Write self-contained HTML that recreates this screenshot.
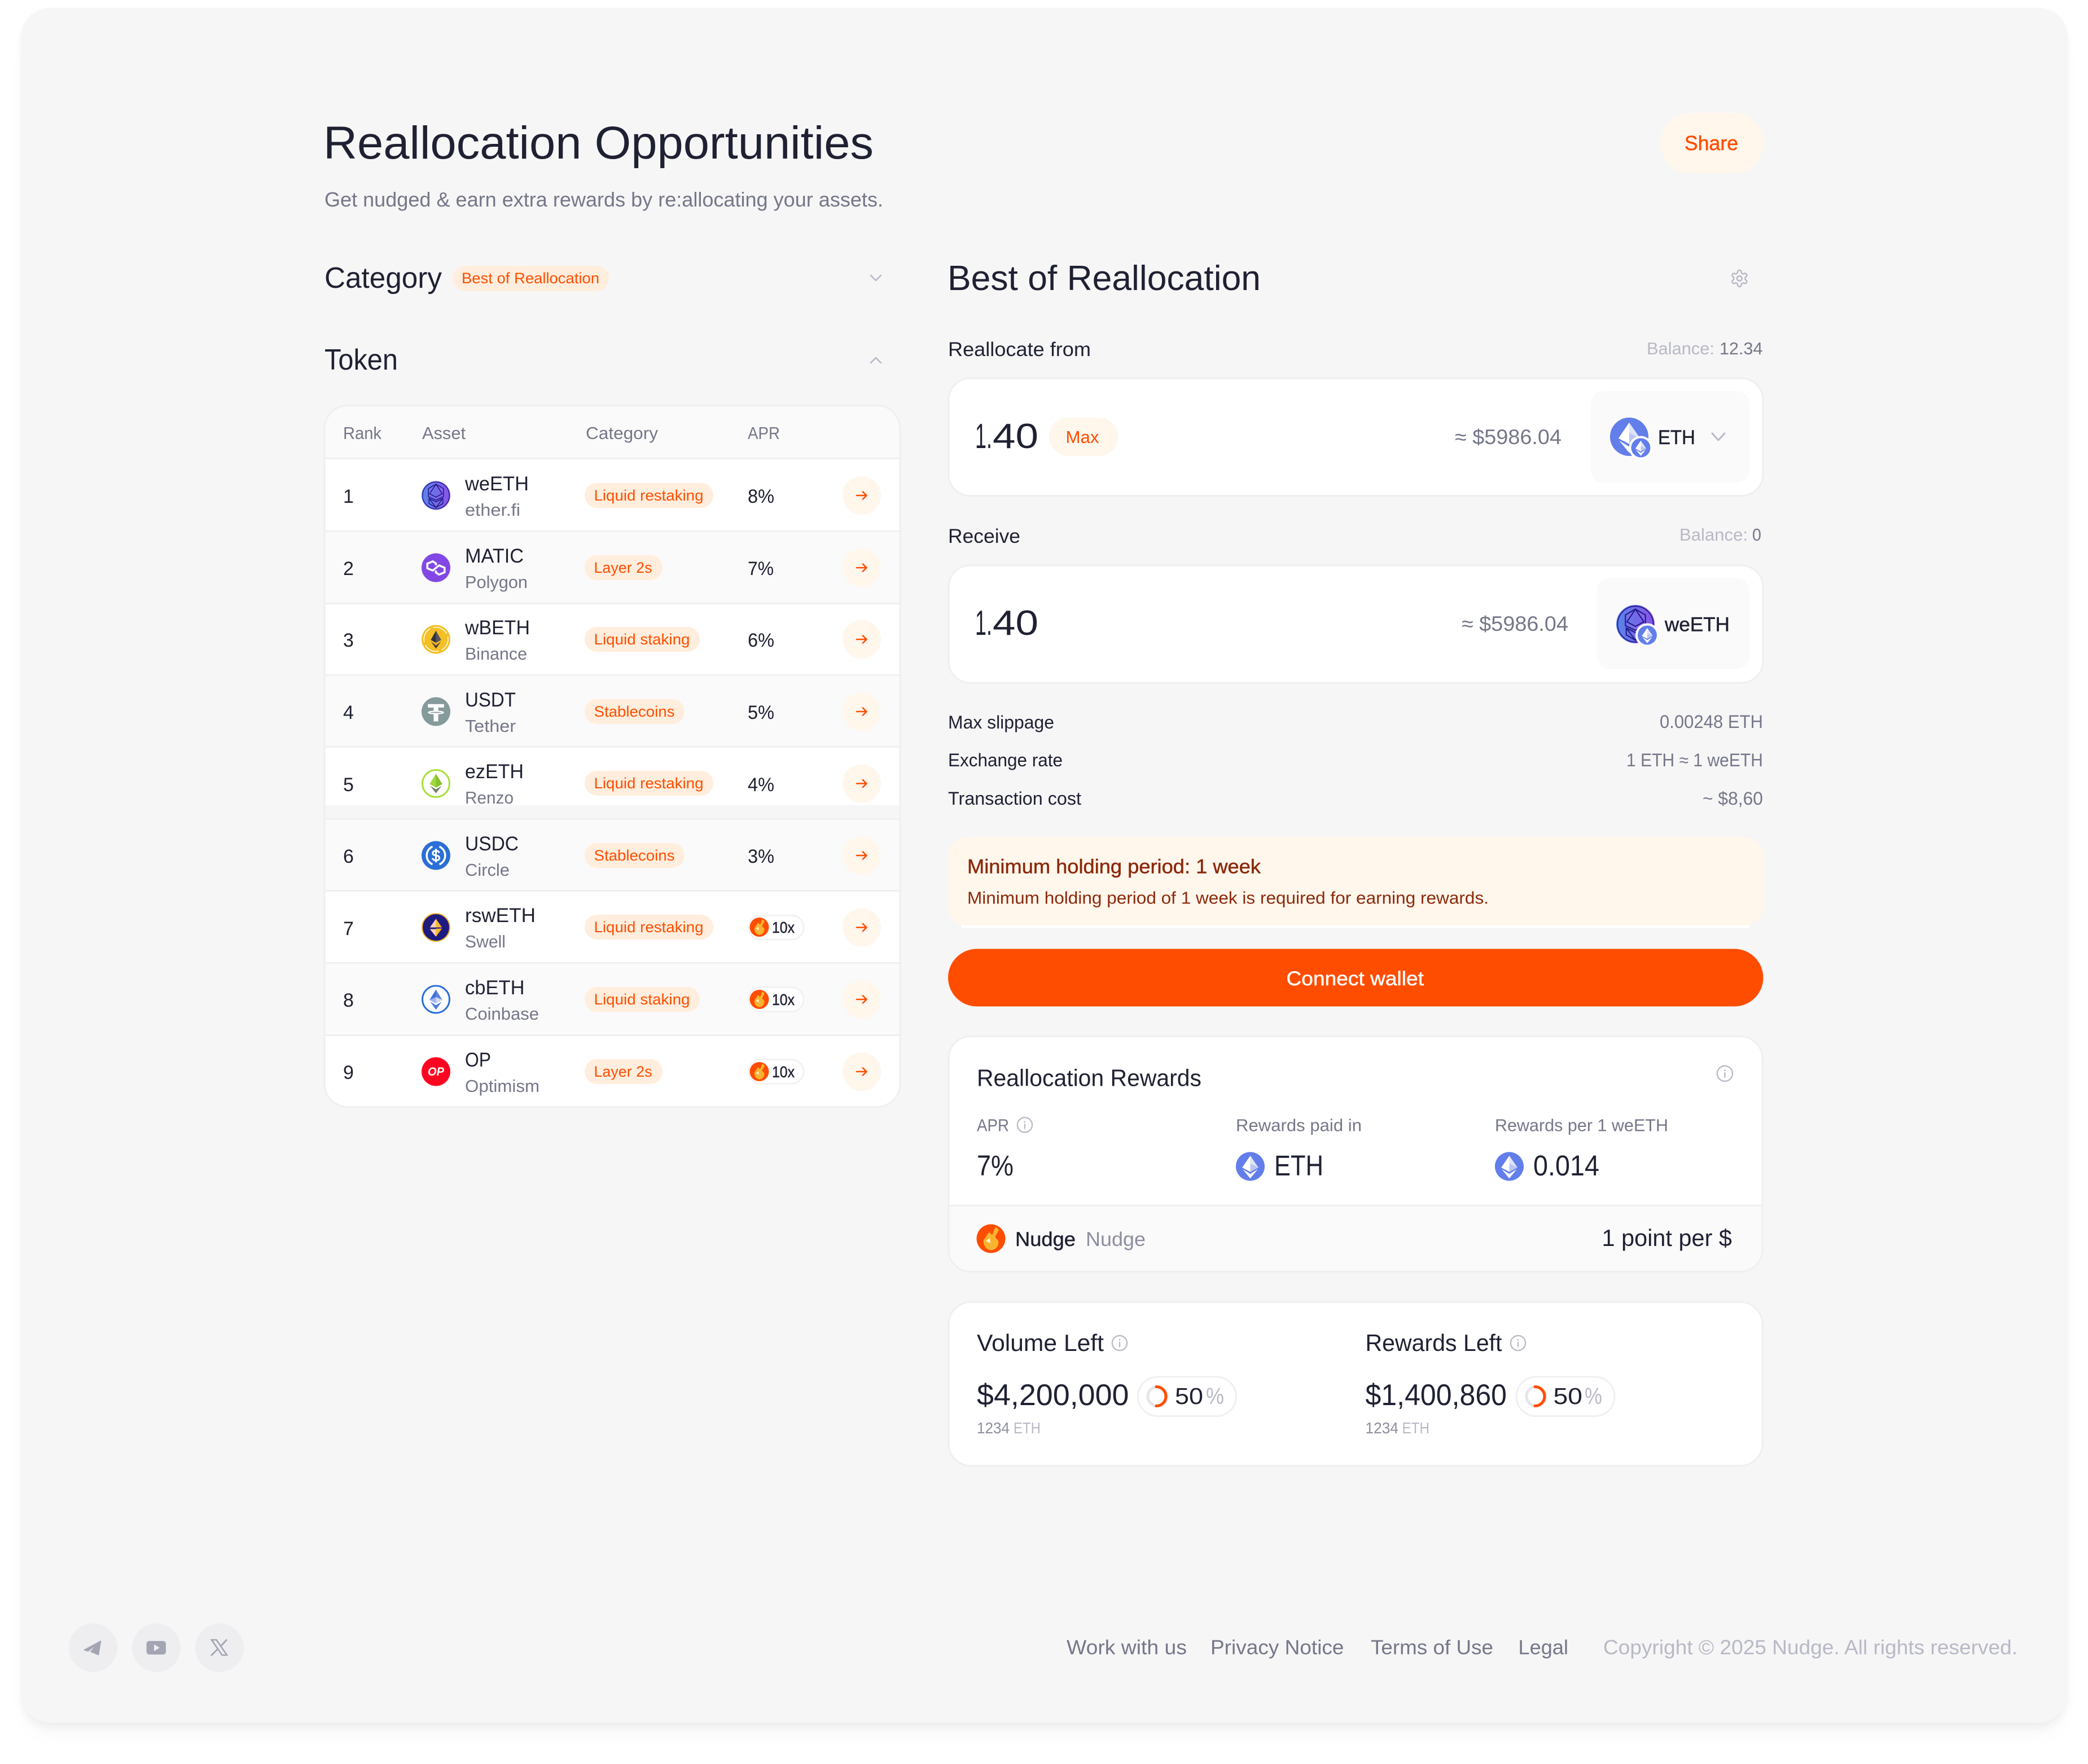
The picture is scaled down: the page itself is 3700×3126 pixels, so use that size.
<!DOCTYPE html>
<html lang="en">
<head>
<meta charset="utf-8">
<title>Reallocation Opportunities</title>
<style>
html,body{margin:0;padding:0;background:#fff;width:3700px;height:3126px;overflow:hidden}
#card{position:absolute;left:37px;top:14px;width:3627px;height:3039px;background:#f6f6f6;border-radius:52px;box-shadow:0 12px 16px -3px rgba(0,0,0,.05),0 28px 38px -6px rgba(0,0,0,.022),0 0 12px rgba(0,0,0,.014)}
svg{position:absolute;left:0;top:0}
text{font-family:"Liberation Sans",Arial,sans-serif;white-space:pre}
.d{fill:#1f2133}.g{fill:#757789}.l{fill:#b8b9c6}.o{fill:#ff4d00}.w{fill:#fff}.n{fill:#8d8e9e}.b{fill:#8b2a0b}
.m{stroke-width:.5px}
.d.m{stroke:#1f2133}.o.m{stroke:#ff4d00}.w.m{stroke:#fff}.b.m{stroke:#8b2a0b}
</style>
</head>
<body>
<div id="card"></div>
<svg width="3700" height="3126" viewBox="0 0 3700 3126" xmlns="http://www.w3.org/2000/svg">
<defs>
<linearGradient id="we" x1="0" y1="0" x2="1" y2="0"><stop offset="0" stop-color="#5a85ea"/><stop offset="1" stop-color="#8a52e6"/></linearGradient>
<clipPath id="tb"><rect x="574" y="717" width="1022" height="1246" rx="42"/></clipPath>
<clipPath id="rc"><rect x="1680" y="1835" width="1444" height="420" rx="40"/></clipPath>
<symbol id="eth" viewBox="0 0 100 100"><circle cx="50" cy="50" r="50" fill="#627eea"/><path d="M50 13 22 54 50 69 78 54Z" fill="#fff"/><path d="M50 13V69L78 54Z" fill="#dfe4f8"/><path d="M50 40 78 54 50 69Z" fill="#b9c5f2"/><path d="M24 60 50 92 76 60 50 76Z" fill="#fff"/></symbol>
<symbol id="wee" viewBox="0 0 100 100"><circle cx="50" cy="50" r="50" fill="url(#we)"/><circle cx="50" cy="50" r="46.500" fill="none" stroke="#1f1a8a" stroke-width="2.500"/><path d="M50 11 76 26V54L50 66 24 54V26ZM50 11 28 44 50 56 72 44Z" fill="#9a6be8" fill-opacity=".35" stroke="#1f1a8a" stroke-width="3"/><path d="M26 60 50 72 74 60V78L50 92 26 78ZM26 60 50 92 74 60" fill="none" stroke="#1f1a8a" stroke-width="3"/></symbol>
<symbol id="pol" viewBox="0 0 100 100"><circle cx="50" cy="50" r="50" fill="#8247e5"/><path d="M50 42V35L39 28 20 36V52L39 60 61 42 80 50V66L61 74 50 67V60" fill="none" stroke="#fff" stroke-width="7" stroke-linejoin="miter"/></symbol>
<symbol id="bnb" viewBox="0 0 100 100"><circle cx="50" cy="50" r="50" fill="#f5bf26"/><circle cx="50" cy="50" r="42" fill="none" stroke="#fff" stroke-width="3" stroke-dasharray="55 11" stroke-dashoffset="10"/><path d="M50 20 32 52 50 62 68 52Z" fill="#33333c"/><path d="M50 20V62L68 52Z" fill="#55555f"/><path d="M33 58 50 82 67 58 50 68Z" fill="#3a3a42"/><path d="M33 58 50 68 67 58 50 72Z" fill="#f09a1a"/></symbol>
<symbol id="usdt" viewBox="0 0 100 100"><circle cx="50" cy="50" r="50" fill="#859a9a"/><path d="M22 24H78V36H58V47C68 47.500 78 49 78 53 78 57 68 59 58 59V84H42V59C32 59 22 57 22 53 22 49 32 47.500 42 47V36H22Z" fill="#fff"/><path d="M28 53C34 50.500 66 50.500 72 53 66 55.500 34 55.500 28 53Z" fill="#859a9a"/></symbol>
<symbol id="ez" viewBox="0 0 100 100"><circle cx="50" cy="50" r="47" fill="#fff" stroke="#a8df3a" stroke-width="6"/><path d="M50 16 28 52 50 64 72 52Z" fill="#9fd93c"/><path d="M50 16V64L72 52Z" fill="#86c22b"/><path d="M30 58 50 84 70 58 50 70Z" fill="#73806a"/></symbol>
<symbol id="usdc" viewBox="0 0 100 100"><circle cx="50" cy="50" r="50" fill="#2a6fd6"/><path d="M38 19A34 34 0 0 0 38 81M62 19A34 34 0 0 1 62 81" fill="none" stroke="#fff" stroke-width="7"/><path d="M61 41C60 36 56 34 50 34 43 34 39 37 39 42 39 54 62 46 62 59 62 64 57 67 50 67 44 67 39 64 38 59M50 27V74" fill="none" stroke="#fff" stroke-width="6"/></symbol>
<symbol id="sw" viewBox="0 0 100 100"><circle cx="50" cy="50" r="48" fill="#1f1a7f" stroke="#f7b733" stroke-width="4"/><path d="M50 20 29 50H50Z" fill="#fbd0b5"/><path d="M50 20 71 50H50Z" fill="#f7b733"/><path d="M29 56H50V82Z" fill="#fbd0b5"/><path d="M71 54H50V82Z" fill="#f7b733"/></symbol>
<symbol id="cb" viewBox="0 0 100 100"><circle cx="50" cy="50" r="47" fill="#fff" stroke="#2a6fd6" stroke-width="6"/><path d="M50 16 28 52 50 64Z" fill="#3f73dc"/><path d="M50 16 72 52 50 64Z" fill="#5b84e4"/><path d="M28 52 50 42 72 52 50 64Z" fill="#9db4ee"/><path d="M50 42 72 52 50 64Z" fill="#d5dbe8"/><path d="M30 58 50 86 70 58 50 70Z" fill="#4d7be0"/></symbol>
<symbol id="fl" viewBox="0 0 100 100"><circle cx="50" cy="50" r="50" fill="#ff4d00"/><path d="M66 8 54 38 44 26 24 56C24 78 36 90 52 90 68 88 78 74 76 58L64 44 78 20Z" fill="#f8b32f"/><path d="M46 48 32 58 48 66Z" fill="#fff" opacity=".85"/></symbol>
<symbol id="info" viewBox="0 0 24 24"><circle cx="12" cy="12" r="10.500" fill="none" stroke="#b8b9c6" stroke-width="1.800"/><path d="M12 11V17" stroke="#b8b9c6" stroke-width="1.800" stroke-linecap="round"/><circle cx="12" cy="7.500" r="1.100" fill="#b8b9c6"/></symbol>
<symbol id="arr" viewBox="0 0 20 16"><path d="M1 8H18M12 1.500 18.500 8 12 14.500" fill="none" stroke="#ff4d00" stroke-width="2.600" stroke-linecap="round" stroke-linejoin="round"/></symbol>
</defs>

<!-- header -->
<text x="573" y="281" font-size="82" class="d" textLength="975" lengthAdjust="spacingAndGlyphs">Reallocation Opportunities</text>
<text x="575" y="366" font-size="36" class="g" textLength="990" lengthAdjust="spacingAndGlyphs">Get nudged &amp; earn extra rewards by re:allocating your assets.</text>
<rect x="2942" y="200" width="183" height="107" rx="53.500" fill="#fff6ec"/>
<text x="2985" y="266" font-size="36" class="o m" textLength="95" lengthAdjust="spacingAndGlyphs">Share</text>

<!-- left filter -->
<text x="575" y="510" font-size="52" class="d" textLength="208" lengthAdjust="spacingAndGlyphs">Category</text>
<rect x="802" y="471" width="277" height="45" rx="22.500" fill="#ffeedd"/>
<text x="818" y="502" font-size="27" class="o" textLength="244" lengthAdjust="spacingAndGlyphs">Best of Reallocation</text>
<path d="M1543 488 1552 497 1561 488" fill="none" stroke="#b8b9c6" stroke-width="2.600" stroke-linecap="round" stroke-linejoin="round"/>
<text x="575" y="655" font-size="52" class="d" textLength="130" lengthAdjust="spacingAndGlyphs">Token</text>
<path d="M1543 643 1552 634 1561 643" fill="none" stroke="#b8b9c6" stroke-width="2.600" stroke-linecap="round" stroke-linejoin="round"/>

<!-- table -->
<g clip-path="url(#tb)">
<rect x="574" y="717" width="1022" height="1246" fill="#fafafa"/>
<rect x="574" y="813" width="1022" height="128" fill="#fff"/>
<rect x="574" y="1069" width="1022" height="127" fill="#fff"/>
<rect x="574" y="1323" width="1022" height="104" fill="#fff"/>
<rect x="574" y="1427" width="1022" height="24" fill="#f6f6f6"/>
<rect x="574" y="1578" width="1022" height="128" fill="#fff"/>
<rect x="574" y="1834" width="1022" height="129" fill="#fff"/>
<g fill="#efefef">
<rect x="574" y="811" width="1022" height="3"/><rect x="574" y="940" width="1022" height="2.500"/><rect x="574" y="1068" width="1022" height="3"/><rect x="574" y="1195" width="1022" height="2.500"/><rect x="574" y="1322" width="1022" height="3"/><rect x="574" y="1450" width="1022" height="2.500"/><rect x="574" y="1577" width="1022" height="3"/><rect x="574" y="1705" width="1022" height="2.500"/><rect x="574" y="1833" width="1022" height="3"/>
</g>
</g>
<rect x="575" y="718.500" width="1020" height="1243" rx="41" fill="none" stroke="#efefef" stroke-width="3"/>
<text x="608" y="778" font-size="31" class="g" textLength="68" lengthAdjust="spacingAndGlyphs">Rank</text>
<text x="748" y="778" font-size="31" class="g" textLength="77" lengthAdjust="spacingAndGlyphs">Asset</text>
<text x="1038" y="778" font-size="31" class="g" textLength="128" lengthAdjust="spacingAndGlyphs">Category</text>
<text x="1325" y="778" font-size="31" class="g" textLength="57" lengthAdjust="spacingAndGlyphs">APR</text>

<!-- row 1 -->
<text x="608" y="891" font-size="34" class="d">1</text>
<use href="#wee" x="747" y="852.500" width="51" height="51"/>
<text x="824" y="869" font-size="35" class="d" textLength="113" lengthAdjust="spacingAndGlyphs">weETH</text>
<text x="824" y="914" font-size="31" class="g" textLength="98" lengthAdjust="spacingAndGlyphs">ether.fi</text>
<rect x="1036" y="856" width="228" height="44" rx="22" fill="#ffeedd"/>
<text x="1052.500" y="887" font-size="27" class="o" textLength="194" lengthAdjust="spacingAndGlyphs">Liquid restaking</text>
<text x="1325" y="891" font-size="34" class="d" textLength="47" lengthAdjust="spacingAndGlyphs">8%</text>
<circle cx="1527" cy="878" r="34" fill="#fff6ec"/><use href="#arr" x="1517" y="870" width="20" height="16"/>

<!-- row 2 -->
<text x="608" y="1019" font-size="34" class="d">2</text>
<use href="#pol" x="747" y="980.500" width="51" height="51"/>
<text x="824" y="997" font-size="35" class="d" textLength="104" lengthAdjust="spacingAndGlyphs">MATIC</text>
<text x="824" y="1042" font-size="31" class="g" textLength="111" lengthAdjust="spacingAndGlyphs">Polygon</text>
<rect x="1036" y="984" width="138" height="44" rx="22" fill="#ffeedd"/>
<text x="1052.500" y="1015" font-size="27" class="o" textLength="103" lengthAdjust="spacingAndGlyphs">Layer 2s</text>
<text x="1325" y="1019" font-size="34" class="d" textLength="46" lengthAdjust="spacingAndGlyphs">7%</text>
<circle cx="1527" cy="1006" r="34" fill="#fff6ec"/><use href="#arr" x="1517" y="998" width="20" height="16"/>

<!-- row 3 -->
<text x="608" y="1146" font-size="34" class="d">3</text>
<use href="#bnb" x="747" y="1107.500" width="51" height="51"/>
<text x="824" y="1124" font-size="35" class="d" textLength="115" lengthAdjust="spacingAndGlyphs">wBETH</text>
<text x="824" y="1169" font-size="31" class="g" textLength="110" lengthAdjust="spacingAndGlyphs">Binance</text>
<rect x="1036" y="1111" width="204" height="44" rx="22" fill="#ffeedd"/>
<text x="1052.500" y="1142" font-size="27" class="o" textLength="170" lengthAdjust="spacingAndGlyphs">Liquid staking</text>
<text x="1325" y="1146" font-size="34" class="d" textLength="47" lengthAdjust="spacingAndGlyphs">6%</text>
<circle cx="1527" cy="1133" r="34" fill="#fff6ec"/><use href="#arr" x="1517" y="1125" width="20" height="16"/>

<!-- row 4 -->
<text x="608" y="1274" font-size="34" class="d">4</text>
<use href="#usdt" x="747" y="1235.500" width="51" height="51"/>
<text x="824" y="1252" font-size="35" class="d" textLength="90" lengthAdjust="spacingAndGlyphs">USDT</text>
<text x="824" y="1297" font-size="31" class="g" textLength="90" lengthAdjust="spacingAndGlyphs">Tether</text>
<rect x="1036" y="1239" width="177" height="44" rx="22" fill="#ffeedd"/>
<text x="1052.500" y="1270" font-size="27" class="o" textLength="143" lengthAdjust="spacingAndGlyphs">Stablecoins</text>
<text x="1325" y="1274" font-size="34" class="d" textLength="47" lengthAdjust="spacingAndGlyphs">5%</text>
<circle cx="1527" cy="1261" r="34" fill="#fff6ec"/><use href="#arr" x="1517" y="1253" width="20" height="16"/>

<!-- row 5 -->
<text x="608" y="1402" font-size="34" class="d">5</text>
<use href="#ez" x="747" y="1363" width="51" height="51"/>
<text x="824" y="1379" font-size="35" class="d" textLength="104" lengthAdjust="spacingAndGlyphs">ezETH</text>
<text x="824" y="1424" font-size="31" class="g" textLength="86" lengthAdjust="spacingAndGlyphs">Renzo</text>
<rect x="1036" y="1366" width="228" height="44" rx="22" fill="#ffeedd"/>
<text x="1052.500" y="1397" font-size="27" class="o" textLength="194" lengthAdjust="spacingAndGlyphs">Liquid restaking</text>
<text x="1325" y="1402" font-size="34" class="d" textLength="47" lengthAdjust="spacingAndGlyphs">4%</text>
<circle cx="1527" cy="1388.500" r="34" fill="#fff6ec"/><use href="#arr" x="1517" y="1380.500" width="20" height="16"/>

<!-- row 6 -->
<text x="608" y="1529" font-size="34" class="d">6</text>
<use href="#usdc" x="747" y="1490.500" width="51" height="51"/>
<text x="824" y="1507" font-size="35" class="d" textLength="95" lengthAdjust="spacingAndGlyphs">USDC</text>
<text x="824" y="1552" font-size="31" class="g" textLength="79" lengthAdjust="spacingAndGlyphs">Circle</text>
<rect x="1036" y="1494" width="177" height="44" rx="22" fill="#ffeedd"/>
<text x="1052.500" y="1525" font-size="27" class="o" textLength="143" lengthAdjust="spacingAndGlyphs">Stablecoins</text>
<text x="1325" y="1529" font-size="34" class="d" textLength="47" lengthAdjust="spacingAndGlyphs">3%</text>
<circle cx="1527" cy="1516" r="34" fill="#fff6ec"/><use href="#arr" x="1517" y="1508" width="20" height="16"/>

<!-- row 7 -->
<text x="608" y="1657" font-size="34" class="d">7</text>
<use href="#sw" x="747" y="1618" width="51" height="51"/>
<text x="824" y="1634" font-size="35" class="d" textLength="125" lengthAdjust="spacingAndGlyphs">rswETH</text>
<text x="824" y="1679" font-size="31" class="g" textLength="72" lengthAdjust="spacingAndGlyphs">Swell</text>
<rect x="1036" y="1621" width="228" height="44" rx="22" fill="#ffeedd"/>
<text x="1052.500" y="1652" font-size="27" class="o" textLength="194" lengthAdjust="spacingAndGlyphs">Liquid restaking</text>
<rect x="1327" y="1622" width="97" height="43" rx="21.500" fill="#fff" stroke="#f0f0f0" stroke-width="2.500"/>
<use href="#fl" x="1328.500" y="1626" width="34" height="34"/>
<text x="1368" y="1653" font-size="28" class="d m" textLength="40" lengthAdjust="spacingAndGlyphs">10x</text>
<circle cx="1527" cy="1643.500" r="34" fill="#fff6ec"/><use href="#arr" x="1517" y="1635.500" width="20" height="16"/>

<!-- row 8 -->
<text x="608" y="1784" font-size="34" class="d">8</text>
<use href="#cb" x="747" y="1745.500" width="51" height="51"/>
<text x="824" y="1762" font-size="35" class="d" textLength="105.500" lengthAdjust="spacingAndGlyphs">cbETH</text>
<text x="824" y="1807" font-size="31" class="g" textLength="131" lengthAdjust="spacingAndGlyphs">Coinbase</text>
<rect x="1036" y="1749" width="204" height="44" rx="22" fill="#ffeedd"/>
<text x="1052.500" y="1780" font-size="27" class="o" textLength="170" lengthAdjust="spacingAndGlyphs">Liquid staking</text>
<rect x="1327" y="1749.500" width="97" height="43" rx="21.500" fill="#fff" stroke="#f0f0f0" stroke-width="2.500"/>
<use href="#fl" x="1328.500" y="1754" width="34" height="34"/>
<text x="1368" y="1781" font-size="28" class="d m" textLength="40" lengthAdjust="spacingAndGlyphs">10x</text>
<circle cx="1527" cy="1771" r="34" fill="#fff6ec"/><use href="#arr" x="1517" y="1763" width="20" height="16"/>

<!-- row 9 -->
<text x="608" y="1912" font-size="34" class="d">9</text>
<circle cx="772.500" cy="1899" r="25.500" fill="#ff0420"/>
<text x="758" y="1906" font-size="21" font-weight="bold" font-style="italic" class="w" textLength="29" lengthAdjust="spacingAndGlyphs">OP</text>
<text x="824" y="1890" font-size="35" class="d" textLength="46" lengthAdjust="spacingAndGlyphs">OP</text>
<text x="824" y="1935" font-size="31" class="g" textLength="132" lengthAdjust="spacingAndGlyphs">Optimism</text>
<rect x="1036" y="1877" width="138" height="44" rx="22" fill="#ffeedd"/>
<text x="1052.500" y="1908" font-size="27" class="o" textLength="103" lengthAdjust="spacingAndGlyphs">Layer 2s</text>
<rect x="1327" y="1877.500" width="97" height="43" rx="21.500" fill="#fff" stroke="#f0f0f0" stroke-width="2.500"/>
<use href="#fl" x="1328.500" y="1882" width="34" height="34"/>
<text x="1368" y="1909" font-size="28" class="d m" textLength="40" lengthAdjust="spacingAndGlyphs">10x</text>
<circle cx="1527" cy="1899" r="34" fill="#fff6ec"/><use href="#arr" x="1517" y="1891" width="20" height="16"/>

<!-- right column -->
<text x="1679" y="514" font-size="62" class="d" textLength="555" lengthAdjust="spacingAndGlyphs">Best of Reallocation</text>
<g transform="translate(3065 476) scale(1.450)" fill="none" stroke="#b8b9c6" stroke-width="1.700" stroke-linecap="round" stroke-linejoin="round"><path d="M12.220 2h-.44a2 2 0 0 0-2 2v.18a2 2 0 0 1-1 1.730l-.43.25a2 2 0 0 1-2 0l-.15-.08a2 2 0 0 0-2.730.73l-.22.38a2 2 0 0 0 .73 2.730l.15.1a2 2 0 0 1 1 1.720v.51a2 2 0 0 1-1 1.740l-.15.09a2 2 0 0 0-.73 2.730l.22.38a2 2 0 0 0 2.730.73l.15-.08a2 2 0 0 1 2 0l.43.25a2 2 0 0 1 1 1.730V20a2 2 0 0 0 2 2h.44a2 2 0 0 0 2-2v-.18a2 2 0 0 1 1-1.730l.43-.25a2 2 0 0 1 2 0l.15.08a2 2 0 0 0 2.730-.73l.22-.39a2 2 0 0 0-.73-2.730l-.15-.08a2 2 0 0 1-1-1.740v-.5a2 2 0 0 1 1-1.740l.15-.09a2 2 0 0 0 .73-2.730l-.22-.38a2 2 0 0 0-2.730-.73l-.15.08a2 2 0 0 1-2 0l-.43-.25a2 2 0 0 1-1-1.730V4a2 2 0 0 0-2-2z"/><circle cx="12" cy="12" r="3"/></g>

<text x="1680" y="631" font-size="35" class="d" textLength="253" lengthAdjust="spacingAndGlyphs">Reallocate from</text>
<text x="2918" y="628" font-size="31" class="l" textLength="120" lengthAdjust="spacingAndGlyphs">Balance:</text>
<text x="3047" y="628" font-size="31" class="g" textLength="76.500" lengthAdjust="spacingAndGlyphs">12.34</text>

<rect x="1681" y="670.500" width="1443" height="208" rx="38" fill="#fff" stroke="#efefef" stroke-width="3"/>
<text x="1728" y="794" font-size="62" class="d" textLength="30" lengthAdjust="spacingAndGlyphs">1.</text>
<text x="1759" y="794" font-size="62" class="d" textLength="81" lengthAdjust="spacingAndGlyphs">40</text>
<rect x="1859" y="740" width="122" height="68" rx="34" fill="#fff6ec"/>
<text x="1888.500" y="785" font-size="31" class="o" textLength="59" lengthAdjust="spacingAndGlyphs">Max</text>
<text x="2578" y="787" font-size="37" class="g" textLength="189" lengthAdjust="spacingAndGlyphs">≈ $5986.04</text>
<rect x="2819" y="693" width="281" height="162" rx="22" fill="#fafafa"/>
<use href="#eth" x="2853" y="740" width="68" height="68"/>
<circle cx="2907.500" cy="793.500" r="21" fill="#fff"/><use href="#eth" x="2890.500" y="776.500" width="34" height="34"/>
<text x="2938" y="787" font-size="35" class="d m" textLength="66" lengthAdjust="spacingAndGlyphs">ETH</text>
<path d="M3034 768 3045 780 3056 768" fill="none" stroke="#b8b9c6" stroke-width="3" stroke-linecap="round" stroke-linejoin="round"/>

<text x="1680" y="962" font-size="35" class="d" textLength="128" lengthAdjust="spacingAndGlyphs">Receive</text>
<text x="2976" y="958" font-size="31" class="l" textLength="121" lengthAdjust="spacingAndGlyphs">Balance:</text>
<text x="3105" y="958" font-size="31" class="g" textLength="16" lengthAdjust="spacingAndGlyphs">0</text>

<rect x="1681" y="1002" width="1443" height="208" rx="38" fill="#fff" stroke="#efefef" stroke-width="3"/>
<text x="1728" y="1125" font-size="62" class="d" textLength="30" lengthAdjust="spacingAndGlyphs">1.</text>
<text x="1759" y="1125" font-size="62" class="d" textLength="81" lengthAdjust="spacingAndGlyphs">40</text>
<text x="2590" y="1118" font-size="37" class="g" textLength="189" lengthAdjust="spacingAndGlyphs">≈ $5986.04</text>
<rect x="2830" y="1024.500" width="270" height="161" rx="22" fill="#fafafa"/>
<use href="#wee" x="2864" y="1072" width="68" height="68"/>
<circle cx="2919" cy="1125.500" r="21" fill="#fff"/><use href="#eth" x="2902" y="1108.500" width="34" height="34"/>
<text x="2950" y="1118.500" font-size="35" class="d m" textLength="115" lengthAdjust="spacingAndGlyphs">weETH</text>

<!-- details -->
<text x="1680" y="1291" font-size="32" class="d" textLength="188" lengthAdjust="spacingAndGlyphs">Max slippage</text>
<text x="2941" y="1290" font-size="32" class="g" textLength="183" lengthAdjust="spacingAndGlyphs">0.00248 ETH</text>
<text x="1680" y="1358" font-size="32" class="d" textLength="203" lengthAdjust="spacingAndGlyphs">Exchange rate</text>
<text x="2882" y="1358" font-size="32" class="g" textLength="242" lengthAdjust="spacingAndGlyphs">1 ETH ≈ 1 weETH</text>
<text x="1680" y="1426" font-size="32" class="d" textLength="236" lengthAdjust="spacingAndGlyphs">Transaction cost</text>
<text x="3017" y="1426" font-size="32" class="g" textLength="107" lengthAdjust="spacingAndGlyphs">~ $8,60</text>

<!-- notice -->
<rect x="1703" y="1630" width="1398" height="15" fill="#fff"/>
<rect x="1679" y="1483" width="1446.500" height="157" rx="36" fill="#fff6ec"/>
<text x="1714" y="1547.500" font-size="35" class="b m" textLength="520" lengthAdjust="spacingAndGlyphs">Minimum holding period: 1 week</text>
<text x="1714" y="1601.500" font-size="31" class="b" textLength="924" lengthAdjust="spacingAndGlyphs">Minimum holding period of 1 week is required for earning rewards.</text>

<!-- button -->
<rect x="1680" y="1681.500" width="1444.500" height="102" rx="51" fill="#ff4d00"/>
<text x="2279.500" y="1746" font-size="35" class="w m" textLength="243.500" lengthAdjust="spacingAndGlyphs">Connect wallet</text>

<!-- rewards -->
<g clip-path="url(#rc)"><rect x="1680" y="1835" width="1444" height="301" fill="#fff"/><rect x="1680" y="2136" width="1444" height="119" fill="#fafafa"/><rect x="1680" y="2135" width="1444" height="3" fill="#efefef"/></g>
<rect x="1681" y="1836.500" width="1442" height="417" rx="39" fill="none" stroke="#efefef" stroke-width="3"/>
<text x="1731" y="1924.500" font-size="42" class="d" textLength="398" lengthAdjust="spacingAndGlyphs">Reallocation Rewards</text>
<use href="#info" x="3041" y="1887" width="31" height="31"/>
<text x="1731" y="2004.500" font-size="31" class="g" textLength="57" lengthAdjust="spacingAndGlyphs">APR</text>
<use href="#info" x="1801" y="1978.500" width="30" height="30"/>
<text x="2190" y="2004.500" font-size="31" class="g" textLength="223" lengthAdjust="spacingAndGlyphs">Rewards paid in</text>
<text x="2649" y="2004.500" font-size="31" class="g" textLength="307" lengthAdjust="spacingAndGlyphs">Rewards per 1 weETH</text>
<text x="1731" y="2083" font-size="51" class="d" textLength="65" lengthAdjust="spacingAndGlyphs">7%</text>
<use href="#eth" x="2190" y="2041.500" width="51" height="51"/>
<text x="2258" y="2083" font-size="51" class="d" textLength="87" lengthAdjust="spacingAndGlyphs">ETH</text>
<use href="#eth" x="2649" y="2041.500" width="51" height="51"/>
<text x="2717" y="2083" font-size="51" class="d" textLength="117" lengthAdjust="spacingAndGlyphs">0.014</text>
<use href="#fl" x="1730.500" y="2169.500" width="51" height="51"/>
<text x="1799" y="2208" font-size="35" class="d m" textLength="107" lengthAdjust="spacingAndGlyphs">Nudge</text>
<text x="1924" y="2208" font-size="35" class="n" textLength="106" lengthAdjust="spacingAndGlyphs">Nudge</text>
<text x="2838.500" y="2208" font-size="42" class="d" textLength="230.500" lengthAdjust="spacingAndGlyphs">1 point per $</text>

<!-- volume -->
<rect x="1681" y="2307.500" width="1442" height="290" rx="39" fill="#fff" stroke="#efefef" stroke-width="3"/>
<text x="1731" y="2394" font-size="42" class="d" textLength="225" lengthAdjust="spacingAndGlyphs">Volume Left</text>
<use href="#info" x="1969" y="2365" width="30" height="30"/>
<text x="2419.500" y="2394" font-size="42" class="d" textLength="242" lengthAdjust="spacingAndGlyphs">Rewards Left</text>
<use href="#info" x="2675" y="2365" width="30" height="30"/>

<text x="1731" y="2490" font-size="53" class="d" textLength="269.500" lengthAdjust="spacingAndGlyphs">$4,200,000</text>
<rect x="2016.500" y="2440" width="174" height="69.500" rx="34.750" fill="#fff" stroke="#f0f0f0" stroke-width="3"/>
<circle cx="2051" cy="2474.500" r="17" fill="none" stroke="#e6e6ea" stroke-width="5"/>
<path d="M2049 2457.500A17 17 0 0 1 2049 2491.500" fill="none" stroke="#ff4d00" stroke-width="5" stroke-linecap="round"/>
<text x="2082" y="2488" font-size="41" class="d" textLength="50" lengthAdjust="spacingAndGlyphs">50</text>
<text x="2137" y="2488" font-size="41" class="l" textLength="32" lengthAdjust="spacingAndGlyphs">%</text>
<text x="1731" y="2540" font-size="28" class="n" textLength="58" lengthAdjust="spacingAndGlyphs">1234</text>
<text x="1796" y="2540" font-size="28" class="l" textLength="48" lengthAdjust="spacingAndGlyphs">ETH</text>

<text x="2419.500" y="2490" font-size="53" class="d" textLength="250.500" lengthAdjust="spacingAndGlyphs">$1,400,860</text>
<rect x="2687" y="2440" width="174" height="69.500" rx="34.750" fill="#fff" stroke="#f0f0f0" stroke-width="3"/>
<circle cx="2722" cy="2474.500" r="17" fill="none" stroke="#e6e6ea" stroke-width="5"/>
<path d="M2720 2457.500A17 17 0 0 1 2720 2491.500" fill="none" stroke="#ff4d00" stroke-width="5" stroke-linecap="round"/>
<text x="2752.500" y="2488" font-size="41" class="d" textLength="51.500" lengthAdjust="spacingAndGlyphs">50</text>
<text x="2808" y="2488" font-size="41" class="l" textLength="31" lengthAdjust="spacingAndGlyphs">%</text>
<text x="2419.500" y="2540" font-size="28" class="n" textLength="58.500" lengthAdjust="spacingAndGlyphs">1234</text>
<text x="2484.500" y="2540" font-size="28" class="l" textLength="48.500" lengthAdjust="spacingAndGlyphs">ETH</text>

<!-- footer -->
<circle cx="165" cy="2920" r="43" fill="#eeeef1"/>
<circle cx="277" cy="2920" r="43" fill="#eeeef1"/>
<circle cx="389" cy="2920" r="43" fill="#eeeef1"/>
<path d="M178.500 2908 149 2924 156 2926 171 2914 161 2927 174.500 2932.500Z" fill="#a4a5b3" stroke="#a4a5b3" stroke-width="1.500" stroke-linejoin="round"/>
<rect x="259.500" y="2908" width="34.500" height="24" rx="5" fill="#a4a5b3"/><path d="M273 2914 283 2920 273 2926Z" fill="#eeeef1"/>
<path d="M375 2906H383.500L402 2933H393.500Z" fill="none" stroke="#a4a5b3" stroke-width="2.600"/>
<path d="M402 2905.500 390.500 2918M385 2923 374 2934" fill="none" stroke="#a4a5b3" stroke-width="2.800"/>

<text x="1890" y="2931.500" font-size="36" class="g" textLength="213" lengthAdjust="spacingAndGlyphs">Work with us</text>
<text x="2145" y="2931.500" font-size="36" class="g" textLength="236.500" lengthAdjust="spacingAndGlyphs">Privacy Notice</text>
<text x="2429" y="2931.500" font-size="36" class="g" textLength="217" lengthAdjust="spacingAndGlyphs">Terms of Use</text>
<text x="2690.500" y="2931.500" font-size="36" class="g" textLength="88.500" lengthAdjust="spacingAndGlyphs">Legal</text>
<text x="2841" y="2931.500" font-size="36" class="l" textLength="734" lengthAdjust="spacingAndGlyphs">Copyright © 2025 Nudge. All rights reserved.</text>
</svg>
</body>
</html>
